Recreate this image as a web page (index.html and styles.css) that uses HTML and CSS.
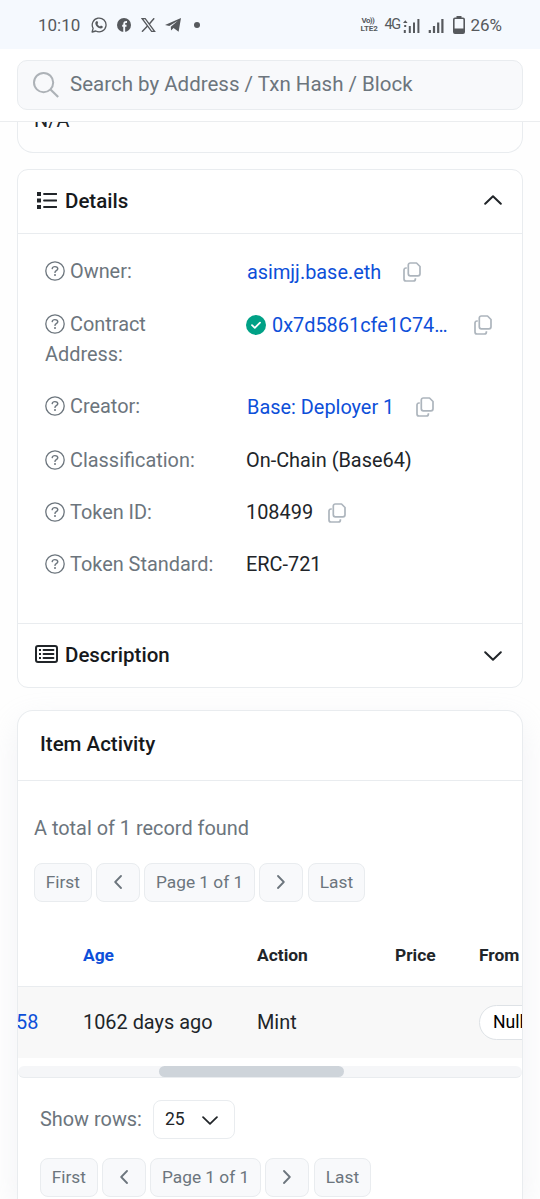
FILE: index.html
```
<!DOCTYPE html>
<html lang="en">
<head>
    <meta charset="UTF-8">
    <meta name="viewport" content="width=device-width, initial-scale=1.0">
    <title>Token Details</title>
    <link rel="stylesheet" href="styles.css">
</head>
<body>
    <!-- Shared icons -->
    <svg class="icon-defs">
        <symbol id="help" viewBox="0 0 20 20">
            <circle cx="10" cy="10" r="9.2" fill="none" stroke="currentColor" stroke-width="1.3"/>
            <path d="M7.2 7.6c.2-1.300 1.100-2 2.700-2 1.700 0 2.900.9 2.900 2.200 0 1.900-2.800 1.800-2.800 3.600" fill="none" stroke="currentColor" stroke-width="1.400" stroke-linecap="round"/>
            <circle cx="10" cy="14" r="1" fill="currentColor"/>
        </symbol>
        <symbol id="copy" viewBox="0 0 18 20">
            <path d="M7.300 1h6.200L17 4.500v7.300a2 2 0 0 1-2 2H7.300a2 2 0 0 1-2-2V3a2 2 0 0 1 2-2z" fill="none" stroke="currentColor" stroke-width="1.700" stroke-linejoin="round"/>
            <path d="M3.800 6H3a2 2 0 0 0-2 2v9a2 2 0 0 0 2 2h7.400a2 2 0 0 0 2-2v-.700" fill="none" stroke="currentColor" stroke-width="1.700"/>
        </symbol>
        <symbol id="down" viewBox="0 0 18 10">
            <path d="M1.200 1.200L9 8.700l7.800-7.500" fill="none" stroke="currentColor" stroke-width="2" stroke-linecap="round" stroke-linejoin="round"/>
        </symbol>
        <symbol id="left" viewBox="0 0 8 14">
            <path d="M7 1L1.200 7 7 13" fill="none" stroke="currentColor" stroke-width="1.800" stroke-linecap="round" stroke-linejoin="round"/>
        </symbol>
        <symbol id="right" viewBox="0 0 8 14">
            <path d="M1 1l5.800 6L1 13" fill="none" stroke="currentColor" stroke-width="1.800" stroke-linecap="round" stroke-linejoin="round"/>
        </symbol>
        <symbol id="signal" viewBox="0 0 16 15">
            <path d="M1.800 12v3M6 8v7M10.200 4.500V15M14.400 1v14" stroke="currentColor" stroke-width="2.200"/>
        </symbol>
    </svg>

    <!-- Status Bar -->
    <div class="status-bar">
        <span class="time">10:10</span>
        <svg class="whatsapp" viewBox="0 0 16 16" width="16" height="16">
            <path d="M1.100 15l1-3.700A6.900 6.900 0 1 1 4.800 14z" fill="none" stroke="currentColor" stroke-width="1.300" stroke-linejoin="round"/>
            <path d="M5.300 4.200l1-.1.900 2-.8 1c.6 1.200 1.400 2 2.600 2.500l1-1 1.800.9c.1 1.100-.7 2-1.900 2C7.300 11.500 4.300 8.600 4.300 6c0-.7.400-1.400 1-1.800z" fill="currentColor"/>
        </svg>
        <svg class="facebook" viewBox="0 0 14 14" width="14" height="14">
            <circle cx="7" cy="7" r="7" fill="currentColor"/>
            <path d="M7.200 14V6c0-1.500.8-2.200 2.800-2M5.200 7.800h4.300" fill="none" stroke="#f5f9fe" stroke-width="1.900"/>
        </svg>
        <svg class="x-logo" viewBox="0 0 15 14" width="15" height="14">
            <path d="M1.200.7h3l9.400 12.600h-3z" fill="none" stroke="currentColor" stroke-width="1.300"/>
            <path d="M13.200.3L8.300 5.900M6.500 8L1 13.700" stroke="currentColor" stroke-width="1.500"/>
        </svg>
        <svg class="telegram" viewBox="0 0 16 14" width="16" height="14">
            <path d="M0 6.900L16 0l-2.400 13.800L8.600 10l-2.600 2.500-.2-3.700 7-6-8.500 5.300z" fill="currentColor"/>
        </svg>
        <span class="dot"></span>
        <div class="status-right">
            <span class="volte"><span class="vo">Vo))</span><span>LTE2</span></span>
            <span class="network">4G</span>
            <svg class="signal-one" viewBox="0 0 17 15" width="17" height="15">
                <path d="M0 5l2.300-2.800L4.600 5zM1.200 7h2v2h-2z" fill="currentColor"/>
                <path d="M1.800 12v3M6.800 8v7M11 4.500V15M15.400 1v14" stroke="currentColor" stroke-width="2"/>
            </svg>
            <svg class="signal-two" width="16" height="15"><use href="#signal"/></svg>
            <svg class="battery" viewBox="0 0 12 18" width="12" height="18">
                <path d="M3.500 0h5v2.500h-5z" fill="currentColor"/>
                <rect x=".8" y="2.300" width="10.400" height="14.900" rx="1.200" fill="none" stroke="currentColor" stroke-width="1.600"/>
                <path d="M1 12.500h10V17H1z" fill="currentColor"/>
            </svg>
            <span>26%</span>
        </div>
    </div>

    <!-- Search Section -->
    <header class="header">
        <div class="search-box">
            <svg viewBox="0 0 26 26" width="26" height="26">
                <circle cx="10.600" cy="10.600" r="9.600" fill="none" stroke="currentColor" stroke-width="2"/>
                <path d="M17.500 17.500l7.700 7.500" stroke="currentColor" stroke-width="2.200"/>
            </svg>
            <span>Search by Address / Txn Hash / Block</span>
        </div>
    </header>

    <main class="content">
        <div class="price-card"><span>N/A</span></div>

        <!-- Token Details -->
        <section class="details-card">
            <div class="card-toggle">
                <svg class="list-icon" viewBox="0 0 20 17" width="20" height="17">
                    <path d="M0 0h4v4H0zM0 6.500h4v4H0zM0 13h4v4H0z" fill="currentColor"/>
                    <path d="M7 2h12.500M7 8.500h12.500M7 15h12.500" stroke="currentColor" stroke-width="1.800" stroke-linecap="round"/>
                </svg>
                <h2>Details</h2>
                <svg class="chevron open" width="18" height="10"><use href="#down"/></svg>
            </div>
            <div class="details-body">
                <div class="row owner">
                    <div class="label"><svg><use href="#help"/></svg>Owner:</div>
                    <div class="value"><a>asimjj.base.eth</a><svg class="copy"><use href="#copy"/></svg></div>
                </div>
                <div class="row contract">
                    <div class="label"><svg><use href="#help"/></svg>Contract Address:</div>
                    <div class="value">
                        <svg class="verified" viewBox="0 0 20 20">
                            <circle cx="10" cy="10" r="10" fill="#00a186"/>
                            <path d="M6 10.200l2.800 2.700 5.200-5.200" fill="none" stroke="#fff" stroke-width="1.800" stroke-linecap="round" stroke-linejoin="round"/>
                        </svg>
                        <a>0x7d5861cfe1C74…</a><svg class="copy"><use href="#copy"/></svg>
                    </div>
                </div>
                <div class="row creator">
                    <div class="label"><svg><use href="#help"/></svg>Creator:</div>
                    <div class="value"><a>Base: Deployer 1</a><svg class="copy"><use href="#copy"/></svg></div>
                </div>
                <div class="row">
                    <div class="label"><svg><use href="#help"/></svg>Classification:</div>
                    <div class="value">On-Chain (Base64)</div>
                </div>
                <div class="row">
                    <div class="label"><svg><use href="#help"/></svg>Token ID:</div>
                    <div class="value">108499<svg class="copy near"><use href="#copy"/></svg></div>
                </div>
                <div class="row">
                    <div class="label"><svg><use href="#help"/></svg>Token Standard:</div>
                    <div class="value">ERC-721</div>
                </div>
            </div>
            <div class="card-toggle description">
                <svg class="list-icon" viewBox="0 0 23 18" width="23" height="18">
                    <rect x="1" y="1" width="21" height="16" rx="2" fill="none" stroke="currentColor" stroke-width="2"/>
                    <path d="M4 4h2v2H4zM4 8h2v2H4zM4 12h2v2H4z" fill="currentColor"/>
                    <path d="M8.500 5h10M8.500 9h10M8.500 13h10" stroke="currentColor" stroke-width="1.800" stroke-linecap="round"/>
                </svg>
                <h2>Description</h2>
                <svg class="chevron" width="18" height="10"><use href="#down"/></svg>
            </div>
        </section>

        <!-- Item Activity -->
        <section class="activity-card">
            <h2 class="activity-title">Item Activity</h2>
            <div class="activity-top">
                <p>A total of 1 record found</p>
                <div class="pagination">
                    <span>First</span>
                    <span class="arrow"><svg><use href="#left"/></svg></span>
                    <span class="page">Page 1 of 1</span>
                    <span class="arrow"><svg><use href="#right"/></svg></span>
                    <span>Last</span>
                </div>
            </div>
            <div class="table">
                <div class="table-row table-head">
                    <span></span>
                    <a>Age</a>
                    <span>Action</span>
                    <span>Price</span>
                    <span>From</span>
                </div>
                <div class="table-row table-data">
                    <a class="txn">58</a>
                    <span>1062 days ago</span>
                    <span>Mint</span>
                    <span></span>
                    <span class="address">Null</span>
                </div>
            </div>
            <div class="scrollbar"><div class="thumb"></div></div>
            <div class="activity-bottom">
                <div class="show-rows">
                    <span>Show rows:</span>
                    <div class="select">25<svg width="16" height="9"><use href="#down"/></svg></div>
                </div>
                <div class="pagination">
                    <span>First</span>
                    <span class="arrow"><svg><use href="#left"/></svg></span>
                    <span class="page">Page 1 of 1</span>
                    <span class="arrow"><svg><use href="#right"/></svg></span>
                    <span>Last</span>
                </div>
            </div>
        </section>
    </main>
</body>
</html>
```
FILE: styles.css
```
/* Styling for the token page */
* {
    box-sizing: border-box;
}

body {
    font-family: Roboto, Arial, sans-serif;
    font-size: 19.9px;
    line-height: 30px;
    margin: 0;
    display: flex;
    flex-direction: column;
    height: 1199px;
    background: #fefefe;
    color: #212529;
}

svg {
    display: block;
    flex: none;
}

a {
    color: #0d4fd9;
}

h2 {
    margin: 0;
    font-size: 20.5px;
    font-weight: 500;
    color: #16191c;
}

.icon-defs {
    display: none;
}

/* Status bar */
.status-bar {
    display: flex;
    align-items: center;
    height: 49px;
    padding: 1px 38px 0 38px;
    background: #f5f9fe;
    color: #56595d;
    font-size: 17px;
}

.time {
    width: 53px;
}

.facebook {
    margin-left: 10px;
}

.x-logo {
    margin-left: 10px;
}

.telegram {
    margin-left: 9px;
}

.dot {
    width: 6px;
    height: 6px;
    margin-left: 13px;
    border-radius: 50%;
    background: #56595d;
}

.status-right {
    display: flex;
    align-items: center;
    margin-left: auto;
}

.volte {
    display: flex;
    flex-direction: column;
    width: 19px;
    margin-right: 5px;
    font-size: 8px;
    font-weight: 700;
    line-height: 8px;
}

.vo {
    padding-left: 1px;
    letter-spacing: -0.6px;
}

.network {
    width: 19px;
    font-size: 14.5px;
    letter-spacing: -1.3px;
}

.signal-two {
    margin-left: 8px;
}

.battery {
    margin: 0 5px 0 9px;
}

/* Search */
.header {
    height: 73px;
    padding: 11px 17px 0;
    background: #fff;
    border-bottom: 1px solid #ebedef;
}

.search-box {
    display: flex;
    align-items: center;
    gap: 11px;
    height: 50px;
    padding: 0 15px 1px;
    border: 1px solid #e9ecef;
    border-radius: 10px;
    background: #f8f9fb;
    color: #6c757d;
    font-size: 20.5px;
}

.search-box span {
    padding-bottom: 2px;
}

.search-box svg {
    color: #adb2b7;
}

.content {
    display: flex;
    flex: 1;
    flex-direction: column;
    padding: 0 17px;
}

.price-card {
    flex: none;
    height: 31px;
    padding-left: 16px;
    overflow: hidden;
    border: 1px solid #e9ecef;
    border-top: 0;
    border-radius: 0 0 16px 16px;
}

.price-card span {
    display: block;
    margin-top: -16px;
}

/* Details */
.details-card {
    flex: none;
    height: 519px;
    margin-top: 16px;
    border: 1px solid #e9ecef;
    border-radius: 11px;
    background: #fff;
}

.card-toggle {
    display: flex;
    align-items: center;
    height: 64px;
    padding: 0 20px 2px 19px;
    border-bottom: 1px solid #e9ecef;
}

.card-toggle h2 {
    margin-left: 8px;
}

.description {
    padding: 0 20px 3px 17px;
    border-top: 1px solid #e9ecef;
    border-bottom: 0;
}

.description h2 {
    margin-left: 7px;
    padding-top: 1px;
}

.chevron {
    margin-top: -2px;
    margin-left: auto;
}

.description .chevron {
    margin-top: 3px;
}

.open {
    transform: rotate(180deg);
}

.details-body {
    height: 389px;
    padding: 23px 20px 0 27px;
}

.row {
    display: flex;
    margin-bottom: 22px;
}

.owner {
    margin-bottom: 23px;
}

.creator {
    margin-bottom: 24px;
}

.label {
    width: 201px;
    padding-right: 20px;
    color: #6c757d;
}

.label svg {
    display: inline-block;
    width: 20px;
    height: 20px;
    margin-right: 5px;
    vertical-align: -3px;
}

.contract .label {
    padding-right: 60px;
}

.value {
    display: flex;
    align-items: center;
    height: 30px;
}

.value a {
    padding: 2px 0 0 1px;
}

.verified {
    width: 20px;
    height: 20px;
    margin-right: 5px;
}

.copy {
    width: 18px;
    height: 20px;
    margin-left: 22px;
    color: #adb5bd;
}

.contract .copy {
    margin-left: 26px;
}

.value .near {
    margin-left: 15px;
}

/* Item activity */
.activity-card {
    flex: 1;
    margin-top: 22px;
    overflow: hidden;
    border: 1px solid #e9ecef;
    border-bottom: 0;
    border-radius: 16px 16px 0 0;
    background: #fff;
    box-shadow: 0 11px 30px rgba(189, 197, 209, 0.2);
}

.activity-title {
    height: 70px;
    padding: 18px 22px 0;
    border-bottom: 1px solid #e9ecef;
}

.activity-top {
    height: 143px;
    padding: 33px 16px 0;
    color: #6c757d;
}

.activity-top p {
    margin: 0 0 19px;
}

.pagination {
    display: flex;
    gap: 4.3px;
    color: #6c757d;
    font-size: 17.3px;
}

.pagination span {
    display: flex;
    align-items: center;
    justify-content: center;
    width: 57.5px;
    height: 39px;
    padding-bottom: 2px;
    border: 1px solid #e9ecef;
    border-radius: 8px;
    background: #f8f9fb;
}

.pagination .arrow {
    width: 44px;
}

.pagination .page {
    width: 111px;
}

.pagination svg {
    width: 8px;
    height: 14px;
}

.table-row {
    display: grid;
    grid-template-columns: 65px 174px 138px 84px 120px;
    align-items: center;
}

.table-head {
    height: 63px;
    border-bottom: 1px solid #e9ecef;
    font-size: 17.4px;
    font-weight: 700;
}

.table-data {
    height: 71px;
    background: #f8f8f8;
}

.txn {
    margin-left: -2px;
}

.address {
    height: 35px;
    padding-left: 13px;
    border: 1px solid #dee2e6;
    border-radius: 18px;
    background: #fff;
    font-size: 17.6px;
    line-height: 32px;
    color: #000;
}

.scrollbar {
    height: 12px;
    margin-top: 8px;
    border-bottom: 1px solid #e9ecef;
    border-radius: 6px;
    background: #f5f6f8;
}

.thumb {
    width: 185px;
    height: 11px;
    margin-left: 141px;
    border-radius: 6px;
    background: #ced4da;
}

.activity-bottom {
    padding: 22px 22px 0;
}

.show-rows {
    display: flex;
    align-items: center;
    gap: 11px;
    height: 39px;
    margin-bottom: 19px;
    color: #6c757d;
}

.select {
    display: flex;
    align-items: center;
    justify-content: space-between;
    width: 82px;
    height: 39px;
    padding: 0 16px 2px 11px;
    border: 1px solid #e9ecef;
    border-radius: 8px;
    color: #212529;
    font-size: 17.6px;
}

.select svg {
    margin-top: 4px;
}
```
